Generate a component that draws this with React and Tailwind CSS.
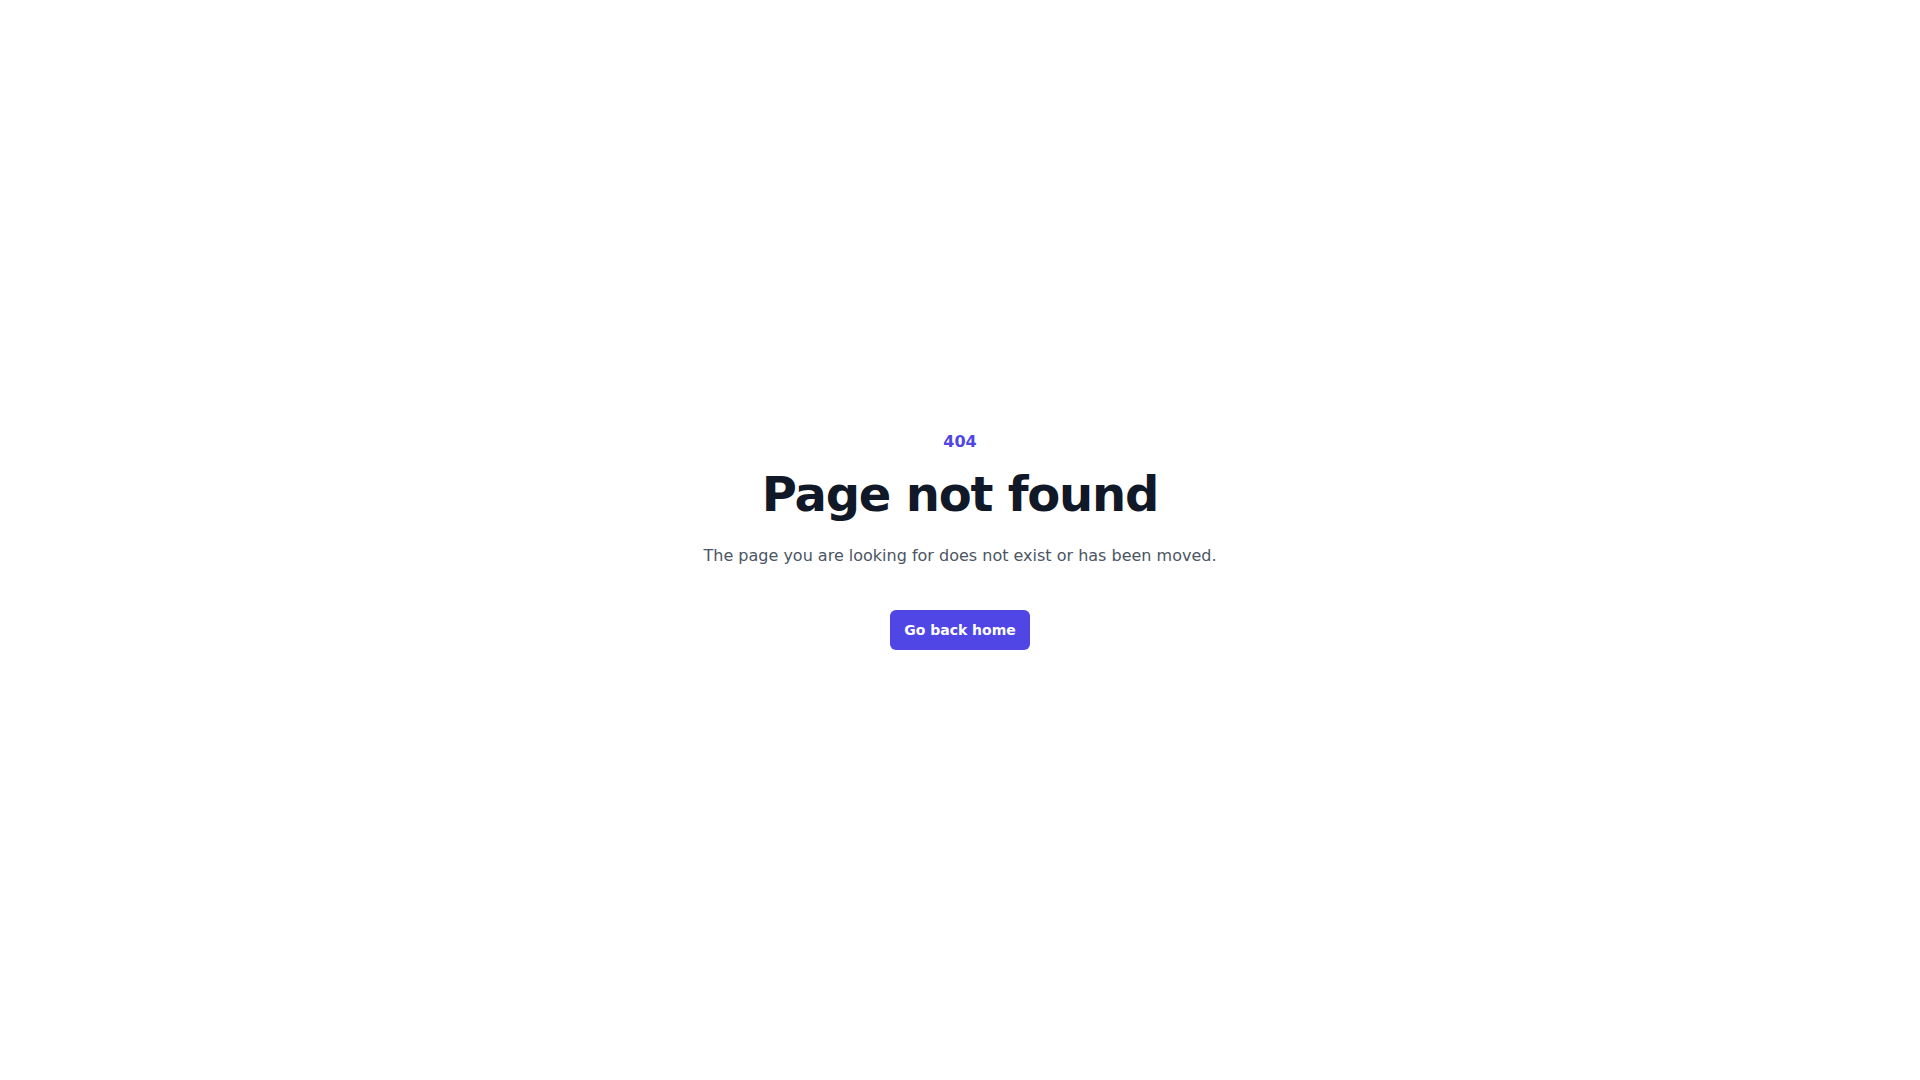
export default function App() {
    return (
        <main className="grid min-h-screen place-items-center bg-white px-6 py-24 font-['DejaVu_Sans',sans-serif] sm:py-32 lg:px-8">
            <div className="text-center">
                <p className="text-base font-semibold text-[#4f46e5]">404</p>
                <h1 className="mt-4 text-3xl font-bold tracking-tight text-[#111827] sm:text-5xl">
                    Page not found
                </h1>
                <p className="mt-6 text-base leading-7 text-[#4b5563]">
                    The page you are looking for does not exist or has been moved.
                </p>
                <div className="mt-10 flex items-center justify-center gap-x-6">
                    <a
                        href="/"
                        className="rounded-md bg-[#4f46e5] px-3.5 py-2.5 text-sm font-semibold text-white hover:bg-[#6366f1] focus-visible:outline-2 focus-visible:outline-offset-2 focus-visible:outline-[#4f46e5]"
                    >
                        Go back home
                    </a>
                </div>
            </div>
        </main>
    );
}
